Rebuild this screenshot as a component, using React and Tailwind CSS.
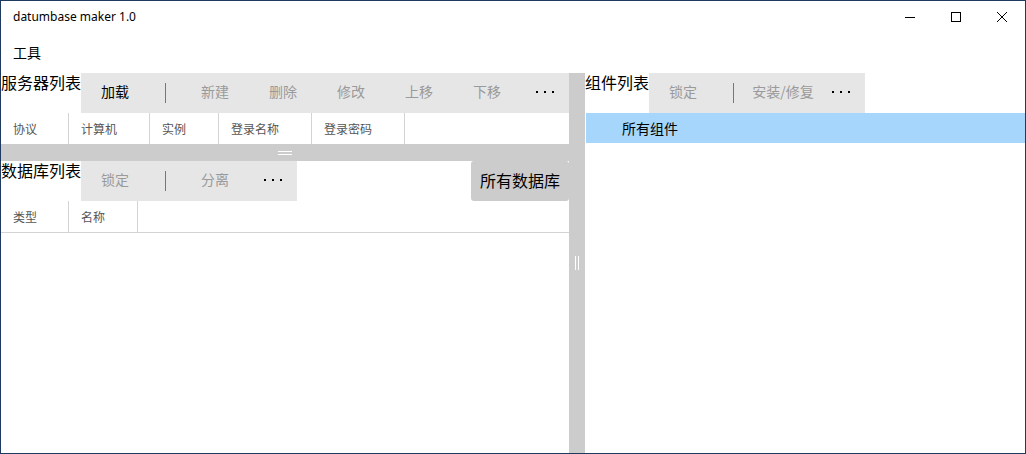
import React from 'react';

const cjk = { fontFamily: '"Noto Sans CJK SC", "Noto Sans", sans-serif' };

const Dots = () => (
  <div className="flex items-center gap-[6px] pb-[2px]">
    <span className="w-[2px] h-[2px] bg-black" />
    <span className="w-[2px] h-[2px] bg-black" />
    <span className="w-[2px] h-[2px] bg-black" />
  </div>
);

const Sep = () => (
  <div className="w-[32px] h-full flex items-center justify-center">
    <div className="w-px h-[20px] bg-[#777]" />
  </div>
);

const Btn = ({ label, active, w = 'w-[68px]' }) => (
  <div className={`${w} h-full flex items-center justify-center pb-[3px] text-[14px] ${active ? 'text-black' : 'text-[#9a9a9a]'}`}>
    {label}
  </div>
);

const Toolbar = ({ children, className = '' }) => (
  <div className={`h-[40px] bg-[#e6e6e6] flex items-stretch ${className}`}>{children}</div>
);

const HeaderRow = ({ cols, className = '' }) => (
  <div className={`flex h-[31px] text-[12px] text-[#555] ${className}`}>
    {cols.map(([label, w]) => (
      <div key={label} className={`${w} shrink-0 flex items-center pl-3 border-r border-[#d4d4d4]`}>
        {label}
      </div>
    ))}
  </div>
);

export default function App() {
  return (
    <div className="w-[1026px] h-[454px] border border-[#1f3a5f] bg-white flex flex-col overflow-hidden" style={cjk}>
      {/* title bar */}
      <div className="h-[31px] shrink-0 flex items-center">
        <div className="pl-3 text-[12px] text-black" style={{ fontFamily: '"Noto Sans", sans-serif' }}>
          datumbase maker 1.0
        </div>
        <div className="ml-auto flex h-full">
          <div className="w-[46px] h-full flex items-center justify-center">
            <svg width="10" height="10" viewBox="0 0 10 10"><path d="M0 5.5h10" stroke="#000" strokeWidth="1" /></svg>
          </div>
          <div className="w-[46px] h-full flex items-center justify-center">
            <svg width="10" height="10" viewBox="0 0 10 10"><rect x="0.5" y="0.5" width="9" height="9" fill="none" stroke="#000" strokeWidth="1" /></svg>
          </div>
          <div className="w-[46px] h-full flex items-center justify-center">
            <svg width="10" height="10" viewBox="0 0 10 10"><path d="M0 0L10 10M10 0L0 10" stroke="#000" strokeWidth="1" /></svg>
          </div>
        </div>
      </div>

      {/* menu */}
      <div className="h-[41px] shrink-0 flex items-center pl-3 text-[14px] text-black">工具</div>

      {/* content */}
      <div className="flex-1 flex min-h-0">
        {/* left pane */}
        <div className="w-[568px] shrink-0 flex flex-col">
          <div className="flex">
            <div className="w-[80px] text-[16px] leading-[18px] text-black">服务器列表</div>
            <Toolbar className="w-[488px]">
              <Btn label="加载" active />
              <Sep />
              <Btn label="新建" />
              <Btn label="删除" />
              <Btn label="修改" />
              <Btn label="上移" />
              <Btn label="下移" />
              <div className="w-[48px] flex items-center justify-center"><Dots /></div>
            </Toolbar>
          </div>
          <HeaderRow
            cols={[
              ['协议', 'w-[68px]'],
              ['计算机', 'w-[81px]'],
              ['实例', 'w-[69px]'],
              ['登录名称', 'w-[93px]'],
              ['登录密码', 'w-[93px]'],
            ]}
          />
          {/* horizontal splitter */}
          <div className="h-[17px] shrink-0 bg-[#cccccc] flex flex-col items-center justify-center gap-[2px]">
            <div className="w-[14px] h-px bg-white" />
            <div className="w-[14px] h-px bg-white" />
          </div>
          <div className="flex">
            <div className="w-[80px] text-[16px] leading-[18px] text-black">数据库列表</div>
            <Toolbar className="w-[216px]">
              <Btn label="锁定" />
              <Sep />
              <Btn label="分离" />
              <div className="w-[48px] flex items-center justify-center"><Dots /></div>
            </Toolbar>
            <div className="ml-auto w-[98px] h-[40px] bg-[#cccccc] rounded-[3px] flex items-center justify-center pb-[2px] text-[16px] text-black">
              所有数据库
            </div>
          </div>
          <HeaderRow
            className="border-b border-[#d4d4d4] h-[32px]"
            cols={[
              ['类型', 'w-[68px]'],
              ['名称', 'w-[69px]'],
            ]}
          />
          <div className="flex-1" />
        </div>

        {/* vertical splitter */}
        <div className="w-[16px] shrink-0 bg-[#cccccc] flex items-center justify-center gap-[2px]">
          <div className="w-px h-[14px] bg-white" />
          <div className="w-px h-[14px] bg-white" />
        </div>

        {/* right pane */}
        <div className="flex-1 flex flex-col">
          <div className="flex">
            <div className="w-[64px] text-[16px] leading-[18px] text-black">组件列表</div>
            <Toolbar className="w-[216px]">
              <Btn label="锁定" />
              <Sep />
              <Btn label="安装/修复" />
              <div className="w-[48px] flex items-center justify-center"><Dots /></div>
            </Toolbar>
          </div>
          <div className="h-[30px] ml-px bg-[#a6d6fb] flex items-center pl-[36px] text-[14px] text-black">
            所有组件
          </div>
        </div>
      </div>
    </div>
  );
}
